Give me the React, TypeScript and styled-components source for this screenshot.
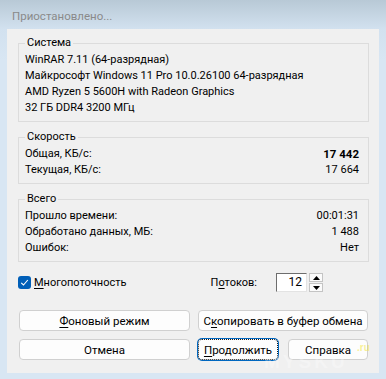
import React from "react";
import styled, { createGlobalStyle } from "styled-components";

const GlobalStyle = createGlobalStyle`
  html, body {
    margin: 0;
    padding: 0;
    background: #d8e6f3;
  }
  body {
    font-family: Roboto, "Segoe UI", sans-serif;
    font-size: 11px;
    color: #000;
  }
`;

const systemLines = [
  "WinRAR 7.11 (64-разрядная)",
  "Майкрософт Windows 11 Pro 10.0.26100 64-разрядная",
  "AMD Ryzen 5 5600H with Radeon Graphics",
  "32 ГБ DDR4 3200 МГц",
];

const speedRows = [
  { label: "Общая, КБ/с:", value: "17 442", bold: true },
  { label: "Текущая, КБ/с:", value: "17 664" },
];

const totalRows = [
  { label: "Прошло времени:", value: "00:01:31" },
  { label: "Обработано данных, МБ:", value: "1 488" },
  { label: "Ошибок:", value: "Нет" },
];

const App = () => {
  return (
    <Window>
      <GlobalStyle />
      <TitleBar>Приостановлено...</TitleBar>
      <Client>
        <Group>
          <Legend>Система</Legend>
          {systemLines.map((line, idx) => (
            <Line key={idx}>{line}</Line>
          ))}
        </Group>

        <Group $gap>
          <Legend>Скорость</Legend>
          {speedRows.map((row, idx) => (
            <Row key={idx}>
              <span>{row.label}</span>
              <Value $bold={row.bold}>{row.value}</Value>
            </Row>
          ))}
        </Group>

        <Group $gap>
          <Legend>Всего</Legend>
          {totalRows.map((row, idx) => (
            <Row key={idx}>
              <span>{row.label}</span>
              <Value>{row.value}</Value>
            </Row>
          ))}
        </Group>

        <OptionsRow>
          <CheckLabel>
            <CheckBox>
              <svg width="9" height="9" viewBox="0 0 9 9">
                <path d="M1.2 4.8 L3.5 7 L7.8 2" fill="none" stroke="#fff" strokeWidth="1.1" />
              </svg>
            </CheckBox>
            <span><Key>М</Key>ногопоточность</span>
          </CheckLabel>

          <Threads>
            <span>П<Key>о</Key>токов:</span>
            <SpinField>
              <NumberBox>12</NumberBox>
              <SpinButtons>
                <SpinButton>
                  <svg width="7" height="4" viewBox="0 0 7 4"><path d="M0 4 L3.5 0 L7 4 Z" fill="#000" /></svg>
                </SpinButton>
                <SpinButton>
                  <svg width="7" height="4" viewBox="0 0 7 4"><path d="M0 0 L3.5 4 L7 0 Z" fill="#000" /></svg>
                </SpinButton>
              </SpinButtons>
            </SpinField>
          </Threads>
        </OptionsRow>

        <Buttons>
          <Button><Key>Ф</Key>оновый режим</Button>
          <Button>С<Key>к</Key>опировать в буфер обмена</Button>
          <Button>Отмена</Button>
          <Pair>
            <Button $focused><Key>П</Key>родолжить</Button>
            <Button>Справка</Button>
          </Pair>
        </Buttons>
      </Client>

      <Brand aria-hidden="true">MYSKU</Brand>
      <Domain aria-hidden="true">.ru</Domain>
    </Window>
  );
};

const Window = styled.div`
  position: relative;
  width: 386px;
  height: 379px;
  display: flex;
  flex-direction: column;
  overflow: hidden;
  background: linear-gradient(to bottom, #b8c9d6 0px, #d2e1ef 29px, #d8e6f3 60px, #d8e6f3 100%);
`;

const TitleBar = styled.div`
  height: 29px;
  box-sizing: border-box;
  padding: 3px 0 0 12px;
  display: flex;
  align-items: center;
  color: #8a8a8a;
  font-size: 11.5px;
`;

const Client = styled.div`
  flex: 1;
  margin: 0 7px 6px 7px;
  padding: 6px 10px 0 11px;
  background: #f0f0f0;
  display: flex;
  flex-direction: column;
`;

const Group = styled.fieldset<{ $gap?: boolean }>`
  margin: ${(p) => (p.$gap ? "7px" : "0")} 0 0 0;
  padding: 1px 9px 5px 6px;
  border: 1px solid #dcdcdc;
  min-width: 0;
`;

const Legend = styled.legend`
  padding: 0 2px;
  line-height: 16px;
`;

const Line = styled.div`
  line-height: 16px;
  white-space: nowrap;
`;

const Row = styled.div`
  display: flex;
  justify-content: space-between;
  line-height: 16px;
`;

const Value = styled.span<{ $bold?: boolean }>`
  font-weight: ${(p) => (p.$bold ? 700 : 400)};
  font-size: ${(p) => (p.$bold ? "11.5px" : "inherit")};
`;

const OptionsRow = styled.div`
  margin-top: 11px;
  height: 19px;
  display: flex;
  align-items: center;
`;

const CheckLabel = styled.label`
  display: flex;
  align-items: center;
  gap: 3px;
`;

const CheckBox = styled.span`
  width: 13px;
  height: 13px;
  border-radius: 3px;
  background: #005fb8;
  display: flex;
  align-items: center;
  justify-content: center;
`;

const Key = styled.u`
  text-decoration: underline;
  text-underline-offset: 2px;
`;

const Threads = styled.div`
  margin-left: auto;
  margin-right: 46px;
  display: flex;
  align-items: center;
  gap: 19px;
`;

const SpinField = styled.div`
  display: flex;
  gap: 2px;
`;

const NumberBox = styled.div`
  width: 31px;
  height: 19px;
  box-sizing: border-box;
  padding-right: 4px;
  background: #fff;
  border-top: 1px solid #6d6d6d;
  border-left: 1px solid #6d6d6d;
  border-right: 1px solid #e3e3e3;
  border-bottom: 1px solid #e3e3e3;
  text-align: right;
  line-height: 17px;
  font-size: 12px;
`;

const SpinButtons = styled.div`
  display: flex;
  flex-direction: column;
  gap: 1px;
`;

const SpinButton = styled.div`
  width: 14px;
  height: 9px;
  box-sizing: border-box;
  border: 1px solid #c4c4c4;
  background: #fbfbfb;
  display: flex;
  align-items: center;
  justify-content: center;
`;

const Buttons = styled.div`
  margin: 18px 1px 0 1px;
  display: grid;
  grid-template-columns: 171px 170px;
  column-gap: 8px;
  row-gap: 8px;
`;

const Pair = styled.div`
  display: grid;
  grid-template-columns: 80px 80px;
  column-gap: 10px;
`;

const Button = styled.button<{ $focused?: boolean }>`
  height: 21px;
  padding: 0;
  font-family: inherit;
  font-size: 11.5px;
  white-space: nowrap;
  color: #000;
  background: #fdfdfd;
  border: 1px ${(p) => (p.$focused ? "dotted #1a1a1a" : "solid #d0d0d0")};
  border-radius: 4px;
  box-shadow: ${(p) => (p.$focused ? "0 0 0 1px #0067c0" : "none")};
`;

const Brand = styled.span`
  position: absolute;
  left: 264px;
  top: 352px;
  font-family: "Liberation Sans", sans-serif;
  font-weight: 700;
  font-size: 19px;
  line-height: 20px;
  letter-spacing: 3px;
  color: rgba(255, 255, 255, 0.3);
  pointer-events: none;
`;

const Domain = styled.span`
  position: absolute;
  left: 357px;
  top: 342px;
  font-family: "Liberation Sans", sans-serif;
  font-weight: 700;
  font-size: 10px;
  line-height: 12px;
  color: rgba(245, 230, 60, 0.55);
  pointer-events: none;
`;

export default App;
